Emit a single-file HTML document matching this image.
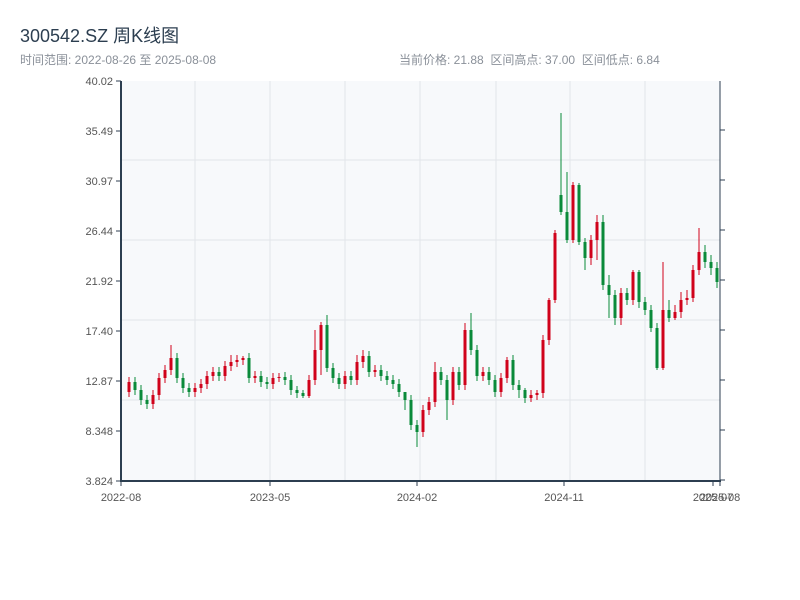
<!DOCTYPE html>
<html><head><meta charset="utf-8"><style>
body{margin:0;width:800px;height:600px;background:#fff;font-family:"Liberation Sans","Noto Sans CJK SC",sans-serif;overflow:hidden;position:relative}
.t{position:absolute;left:20px;top:22px;font-size:18px;color:#2c3e50}
.s{position:absolute;top:51px;font-size:12px;color:#8a9099}
</style></head><body>
<div class="t">300542.SZ 周K线图</div>
<div class="s" style="left:20px">时间范围: 2022-08-26 至 2025-08-08</div>
<div class="s" style="left:399px">当前价格: 21.88&nbsp;&nbsp;区间高点: 37.00&nbsp;&nbsp;区间低点: 6.84</div>
<svg width="800" height="600" style="position:absolute;left:0;top:0" font-family="Liberation Sans, sans-serif" font-size="11">
<rect x="121" y="81" width="599" height="400" fill="#f7f9fb"/>
<g stroke="#e2e5ea" stroke-width="1">
<path d="M121,160H720M121,240H720M121,320H720M121,400H720M195,81V481M270,81V481M345,81V481M420,81V481M496,81V481M570,81V481M645,81V481"/>
</g>
<g stroke="#2c3e50" stroke-width="1">
<path d="M116,81H121M116,131H121M116,181H121M116,231H121M116,281H121M116,331H121M116,381H121M116,431H121M116,481H121"/>
<path d="M720,130H725M720,180H725M720,230H725M720,280H725M720,330H725M720,380H725M720,430H725M720,480H725"/>
<path d="M121,481V486M270,481V486M417,481V486M564,481V486M713,481V486M720,481V486"/>
<path d="M720,81V481"/>
<path d="M121,81V482M120,481H721" stroke-width="2"/>
</g>
<g fill="#555" text-anchor="end">
<text x="113" y="85">40.02</text><text x="113" y="135">35.49</text><text x="113" y="185">30.97</text><text x="113" y="235">26.44</text><text x="113" y="285">21.92</text><text x="113" y="335">17.40</text><text x="113" y="385">12.87</text><text x="113" y="435">8.348</text><text x="113" y="485">3.824</text>
</g>
<g fill="#555" text-anchor="middle">
<text x="121" y="501">2022-08</text><text x="270" y="501">2023-05</text><text x="417" y="501">2024-02</text><text x="564" y="501">2024-11</text><text x="713" y="501">2025-07</text><text x="720" y="501">2025-08</text>
</g>
<g stroke="#d0021b" fill="none">
<path stroke-width="1" d="M129,377V397M153,390V409M159,373V400M165,365V383M171,345V375M195,383V397M201,379V393M207,371V389M213,367V381M225,361V381M231,355V371M237,355V367M243,356V365M255,371V383M273,373V389M279,373V382M309,375V398M315,330V385M321,322V375M345,371V389M357,355V385M363,350V368M375,365V377M423,405V437M429,397V415M435,362V407M453,367V405M465,323V390M483,367V381M501,373V397M507,357V383M531,390V402M537,390V400M543,335V398M549,298V345M555,230V303M573,182V243M591,235V265M597,215V260M621,288V325M633,270V305M663,262V370M675,305V320M681,292V318M687,290V305M693,265V302M699,228V275"/>
<path stroke-width="3" d="M129,392V382M153,404V395M159,395V378M165,378V370M171,370V358M195,392V388M201,388V384M207,384V376M213,376V372M225,376V366M231,366V362M237,362V360M243,360V358M255,378V376M273,384V378M279,378V377M309,396V380M315,380V350M321,350V325M345,384V376M357,380V362M363,362V356M375,372V370M423,432V410M429,410V402M435,402V372M453,400V372M465,385V330M483,376V372M501,392V378M507,378V360M531,398V395M537,395V393M543,393V340M549,340V300M555,300V233M573,240V185M591,258V240M597,240V222M621,318V293M633,300V272M663,368V310M675,318V312M681,312V300M687,300V298M693,298V270M699,270V252"/>
</g>
<g stroke="#0a8a3a" fill="none">
<path stroke-width="1" d="M135,377V395M141,385V405M147,395V409M177,353V383M183,373V393M189,383V397M219,367V381M249,353V383M261,371V387M267,377V389M285,372V385M291,375V395M297,386V398M303,390V398M327,315V372M333,363V383M339,373V389M351,371V385M369,351V377M381,365V381M387,371V385M393,375V389M399,379V397M405,395V410M411,395V430M417,420V447M441,367V385M447,375V420M459,367V390M471,313V355M477,345V381M489,367V385M495,375V397M513,355V390M519,380V398M525,388V403M561,113V215M567,172V243M579,183V245M585,238V270M603,215V290M609,275V318M615,290V325M627,288V305M639,270V308M645,297V315M651,305V332M657,323V370M669,300V322M705,245V268M711,255V275M717,262V288"/>
<path stroke-width="3" d="M135,382V390M141,390V400M147,400V404M177,358V378M183,378V388M189,388V392M219,372V376M249,358V378M261,376V382M267,382V384M285,377V380M291,380V390M297,390V393M303,393V396M327,325V368M333,368V378M339,378V384M351,376V380M369,356V372M381,370V376M387,376V380M393,380V384M399,384V392M405,392V400M411,400V425M417,425V432M441,372V380M447,380V400M459,372V385M471,330V350M477,350V376M489,372V380M495,380V392M513,360V385M519,385V390M525,390V398M561,195V212M567,212V240M579,185V242M585,242V258M603,222V285M609,285V295M615,295V318M627,293V300M639,272V302M645,302V310M651,310V328M657,328V368M669,310V318M705,252V262M711,262V268M717,268V282"/>
</g>
</svg>
</body></html>
